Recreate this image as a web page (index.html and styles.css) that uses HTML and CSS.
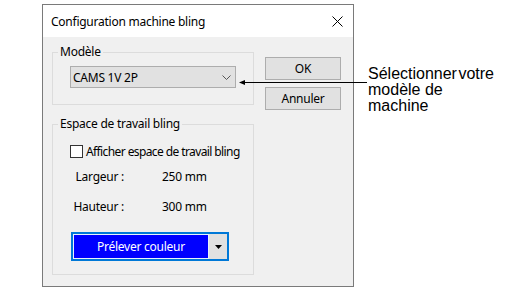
FILE: index.html
```html
<!DOCTYPE html>
<html lang="fr">
<head>
    <meta charset="UTF-8">
    <title>Configuration machine bling</title>
    <link rel="stylesheet" href="styles.css">
</head>
<body>
    <div class="stage">
        <div class="dialog">
            <div class="titlebar">
                <span class="title">Configuration machine bling</span>
                <svg class="close" width="11" height="11" viewBox="0 0 11 11">
                    <path d="M0.5 0.5 L10.5 10.5 M10.5 0.5 L0.5 10.5" stroke="#000" stroke-width="1" fill="none"/>
                </svg>
            </div>

            <div class="dialog-body">
                <div class="left-col">
                    <fieldset class="group group-model">
                        <legend>Modèle</legend>
                        <div class="group-content">
                            <div class="combo">
                                <span>CAMS 1V 2P</span>
                                <svg width="9" height="5" viewBox="0 0 9 5">
                                    <path d="M0.5 0.5 L4.5 4.5 L8.5 0.5" stroke="#555" stroke-width="1" fill="none"/>
                                </svg>
                            </div>
                        </div>
                    </fieldset>

                    <fieldset class="group group-space">
                        <legend>Espace de travail bling</legend>
                        <div class="group-content">
                            <label class="check-row">
                                <span class="checkbox"></span>
                                <span class="check-text">Afficher espace de travail bling</span>
                            </label>
                            <div class="size-grid">
                                <span class="size-label">Largeur :</span>
                                <span>250 mm</span>
                                <span class="size-label">Hauteur :</span>
                                <span>300 mm</span>
                            </div>
                            <div class="pick">
                                <div class="pick-main">Prélever couleur</div>
                                <div class="pick-drop">
                                    <svg width="7" height="4" viewBox="0 0 7 4">
                                        <path d="M0 0 L7 0 L3.5 4 Z" fill="#000"/>
                                    </svg>
                                </div>
                            </div>
                        </div>
                    </fieldset>
                </div>

                <div class="right-col">
                    <button class="btn">OK</button>
                    <button class="btn">Annuler</button>
                </div>
            </div>
        </div>

        <!-- callout annotation -->
        <svg class="callout-line" width="130" height="7" viewBox="0 0 130 7">
            <path d="M0 3.5 L6 1 L6 6 Z" fill="#000"/>
            <line x1="4" y1="3.5" x2="128" y2="3.5" stroke="#000" stroke-width="1"/>
        </svg>
        <div class="callout-text"><span class="tight">Sélectionner votre</span><br>modèle de<br>machine</div>
    </div>
</body>
</html>
```

FILE: styles.css
```css
* {
    margin: 0;
    padding: 0;
    box-sizing: border-box;
}

body {
    background-color: #ffffff;
    color: #000000;
    font-family: 'Noto Sans', sans-serif;
    font-size: 12px;
    letter-spacing: -0.25px;
}

.stage {
    position: relative;
    padding: 4px 0 0 42px;
}

.dialog {
    width: 312px;
    height: 283px;
    border: 1px solid #7a7a7a;
    background-color: #f0f0f0;
}

.titlebar {
    height: 32px;
    background-color: #ffffff;
    display: flex;
    align-items: center;
    justify-content: space-between;
    padding: 0 10px 0 8px;
}

.close {
    display: block;
}

.dialog-body {
    display: flex;
    gap: 11px;
    padding: 7px 0 0 9px;
}

.left-col {
    width: 202px;
    display: flex;
    flex-direction: column;
    gap: 11px;
}

.group {
    border: 1px solid #dcdcdc;
    min-width: 0;
}

.group legend {
    margin-left: 5px;
    padding: 0 2px;
    line-height: 16px;
}

.group-content {
    padding-left: 17px;
}

.group-model .group-content {
    padding-top: 6px;
    padding-bottom: 16px;
}

.combo {
    width: 166px;
    height: 22px;
    background-color: #e1e1e1;
    border: 1px solid #adadad;
    display: flex;
    align-items: center;
    justify-content: space-between;
    padding: 0 4px 0 2px;
}

.group-space .group-content {
    padding-top: 11px;
    padding-bottom: 13px;
}

.check-row {
    display: flex;
    align-items: center;
    gap: 3px;
    height: 16px;
    white-space: nowrap;
}

.check-text {
    letter-spacing: -0.6px;
}

.checkbox {
    width: 13px;
    height: 13px;
    flex-shrink: 0;
    background-color: #ffffff;
    border: 1px solid #333333;
}

.size-grid {
    display: grid;
    grid-template-columns: 54px auto;
    column-gap: 38px;
    row-gap: 14px;
    margin-top: 10px;
    line-height: 16px;
}

.size-label {
    text-align: right;
}

.pick {
    display: flex;
    width: 158px;
    height: 29px;
    margin-top: 17px;
    margin-left: 1px;
    border: 2px solid #0078d7;
    background-color: #e1e1e1;
}

.pick-main {
    flex: 1;
    background-color: #0000ff;
    border: 1px solid #e8f2fb;
    color: #ffffff;
    display: flex;
    align-items: center;
    justify-content: center;
}

.pick-drop {
    width: 18px;
    display: flex;
    align-items: center;
    justify-content: center;
}

.pick-drop svg {
    display: block;
}

.right-col {
    display: flex;
    flex-direction: column;
    gap: 7px;
    padding-top: 13px;
}

.btn {
    width: 76px;
    height: 23px;
    background-color: #e1e1e1;
    border: 1px solid #adadad;
    font-family: 'Noto Sans', sans-serif;
    font-size: 12px;
    letter-spacing: -0.25px;
    color: #000000;
}

.callout-line {
    position: absolute;
    left: 239px;
    top: 79px;
}

.callout-text {
    position: absolute;
    left: 368px;
    top: 66px;
    font-family: 'Liberation Sans', Arial, sans-serif;
    font-size: 16px;
    line-height: 16px;
    letter-spacing: 0;
}

.tight {
    word-spacing: -3px;
}
```
